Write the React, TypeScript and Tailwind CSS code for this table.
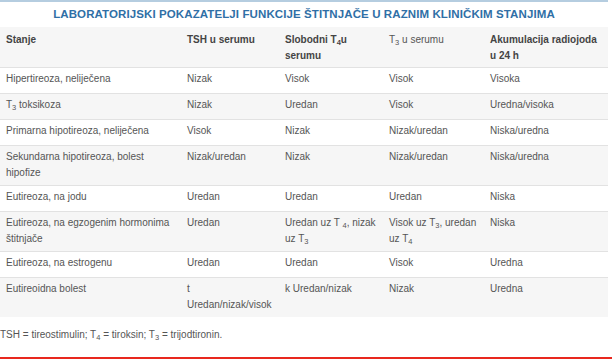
const rows: { cells: React.ReactNode[] }[] = [
  { cells: ["Hipertireoza, neliječena", "Nizak", "Visok", "Visok", "Visoka"] },
  { cells: [<>T<sub>3</sub> toksikoza</>, "Nizak", "Uredan", "Visok", "Uredna/visoka"] },
  { cells: ["Primarna hipotireoza, neliječena", "Visok", "Nizak", "Nizak/uredan", "Niska/uredna"] },
  { cells: ["Sekundarna hipotireoza, bolest hipofize", "Nizak/uredan", "Nizak", "Nizak/uredan", "Niska/uredna"] },
  { cells: ["Eutireoza, na jodu", "Uredan", "Uredan", "Uredan", "Niska"] },
  {
    cells: [
      "Eutireoza, na egzogenim hormonima štitnjače",
      "Uredan",
      <>Uredan uz T <sub>4</sub>, nizak uz T<sub>3</sub></>,
      <>Visok uz T<sub>3</sub>, uredan uz T<sub>4</sub></>,
      "Niska",
    ],
  },
  { cells: ["Eutireoza, na estrogenu", "Uredan", "Uredan", "Visok", "Uredna"] },
  { cells: ["Eutireoidna bolest", <>t<br />Uredan/nizak/visok</>, "k Uredan/nizak", "Nizak", "Uredna"] },
]

const widths = ["w-[181px]", "w-[98px]", "w-[104px]", "w-[101px]", "w-[124px]"]

const App = () => {
  return (
    <div className="w-[612px] h-[359px] bg-white font-['Liberation_Sans',Arial,sans-serif] text-[10px] text-[#555] overflow-hidden">
      <div className="w-[608px] border-t-2 border-[#b5cde0]">
        <p className="h-[25px] flex items-center justify-center text-[11.5px] font-bold text-[#2f6fa6] tracking-[0.1px]">
          LABORATORIJSKI POKAZATELJI FUNKCIJE ŠTITNJAČE U RAZNIM KLINIČKIM STANJIMA
        </p>
        <table className="w-full table-fixed">
          <thead>
            <tr className="bg-[#f6f6f6] text-left align-top font-bold text-[#444] leading-[16px]">
              <th className={`${widths[0]} px-[6px] pt-[5px] pb-[3px] font-bold`}>Stanje</th>
              <th className={`${widths[1]} px-[6px] pt-[5px] pb-[3px] font-bold`}>TSH u serumu</th>
              <th className={`${widths[2]} px-[6px] pt-[5px] pb-[3px] font-bold`}>
                Slobodni T<sub>4</sub>u serumu
              </th>
              <th className={`${widths[3]} px-[6px] pt-[5px] pb-[3px] font-normal text-[#555]`}>
                T<sub>3</sub> u serumu
              </th>
              <th className={`${widths[4]} px-[6px] pt-[5px] pb-[3px] font-bold`}>Akumulacija radiojoda u 24 h</th>
            </tr>
          </thead>
          <tbody>
            {rows.map((row, i) => (
              <tr
                key={i}
                className={`h-[26px] border-t border-[#e2e2e2] align-top leading-[16px] ${i % 2 === 1 ? "bg-[#f6f6f6]" : "bg-white"}`}
              >
                {row.cells.map((c, j) => (
                  <td key={j} className="px-[6px] pt-[3px] pb-[4px]">
                    {c}
                  </td>
                ))}
              </tr>
            ))}
          </tbody>
        </table>
        <p className="mt-[10px] leading-[16px]">
          TSH = tireostimulin; T<sub>4</sub> = tiroksin; T<sub>3</sub> = trijodtironin.
        </p>
      </div>
      <div className="mt-[14px] h-[2px] w-[612px] bg-[#e8281e]" />
    </div>
  )
}

export default App
